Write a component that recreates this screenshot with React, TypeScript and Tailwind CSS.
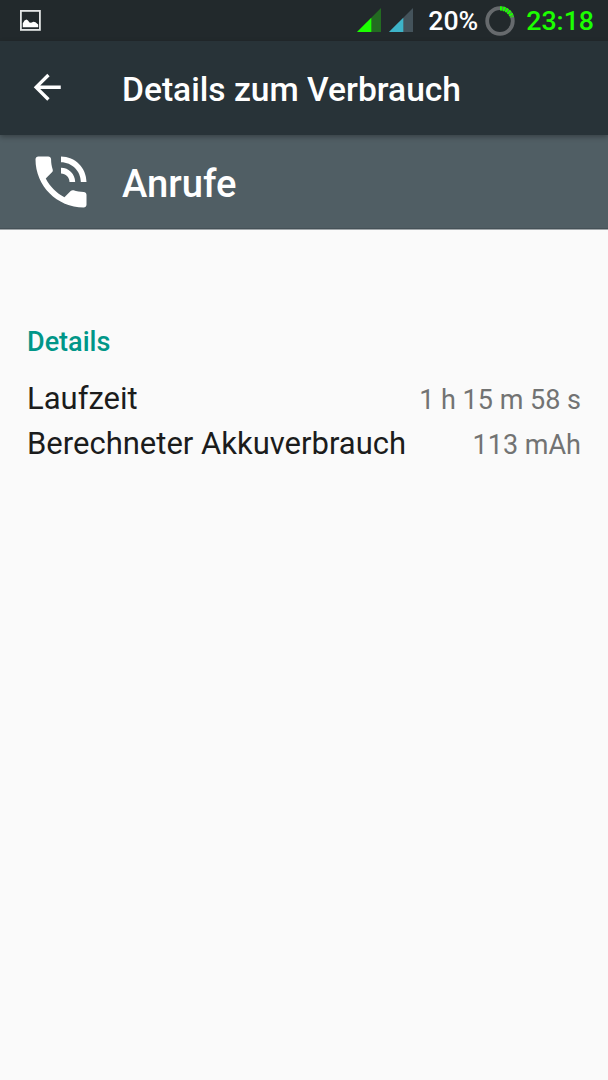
import React from 'react';

interface DetailRowProps {
    label: string;
    value: string;
}

interface SignalIconProps {
    color: string;
    background: string;
}

const details: DetailRowProps[] = [
    { label: 'Laufzeit', value: '1 h 15 m 58 s' },
    { label: 'Berechneter Akkuverbrauch', value: '113 mAh' },
];

function ScreenshotIcon() {
    return (
        <svg width="21" height="21" viewBox="0 0 21 21">
            <rect x="0.9" y="0.9" width="19" height="19" fill="none" stroke="#e4e6e7" strokeWidth="1.8" />
            <path d="M2.8 17.2V13.2L4.5 10.6L6.5 9.6L8 10.6L9.5 12.4L11 12.8L13.5 11.8L15.5 12.2L18.2 14.5V17.2Z" fill="#fff" />
        </svg>
    );
}

function SignalIcon({ color, background }: SignalIconProps) {
    return (
        <svg className="mb-0.5" width="24" height="24" viewBox="0 0 24 24">
            <path d="M0 24L24 0V24Z" fill={background} />
            <path d="M0 24L14.3 9.7V24Z" fill={color} />
        </svg>
    );
}

function BatteryRing() {
    return (
        <svg width="30" height="30" viewBox="0 0 30 30" fill="none">
            <circle cx="15" cy="15" r="12.8" stroke="#666a6d" strokeWidth="3.8" />
            {/* 20 % charge, starting at twelve o'clock */}
            <path d="M15 2.4A12.6 12.6 0 0 1 27 11.1" stroke="#1cff00" strokeWidth="4.4" strokeDasharray="2.2 0.8" />
        </svg>
    );
}

function StatusBar() {
    return (
        <div className="flex h-[41px] items-center bg-[#22292c] pl-5 pr-[14px]">
            <ScreenshotIcon />
            <div className="ml-auto flex items-center">
                <SignalIcon color="#1cff00" background="#236b21" />
                <span className="ml-2 flex">
                    <SignalIcon color="#3db4c9" background="#44535b" />
                </span>
                <span className="ml-[15px] pt-0.5 text-[26.7px] font-medium leading-none text-white">20%</span>
                <span className="ml-[7px] flex">
                    <BatteryRing />
                </span>
                <span className="ml-[11px] pt-0.5 text-[26.7px] font-medium leading-none text-[#1cff00]">23:18</span>
            </div>
        </div>
    );
}

function DetailRow({ label, value }: DetailRowProps) {
    return (
        <div className="flex h-[45px] items-center justify-between">
            <span className="pt-px text-[31px] text-[#1b1c1c]">{label}</span>
            <span className="pt-[3px] text-[27px] text-[#727373]">{value}</span>
        </div>
    );
}

export default function App() {
    return (
        <div className="flex h-[1080px] w-[608px] flex-col overflow-hidden bg-[#fafafa] font-['Roboto',sans-serif]">
            <StatusBar />

            {/* Toolbar */}
            <header className="z-10 flex h-[94px] shrink-0 items-center bg-[#283338] pl-[27px] shadow-[0_2px_5px_rgba(0,0,0,0.3)]">
                <button type="button" className="w-[95px] pb-px">
                    <svg width="40.5" height="40.5" viewBox="0 0 24 24" fill="#fff">
                        <path d="M20 11H7.83l5.59-5.59L12 4l-8 8 8 8 1.41-1.41L7.83 13H20v-2z" />
                    </svg>
                </button>
                <h1 className="pt-1 text-[33.6px] font-medium text-white">Details zum Verbrauch</h1>
            </header>

            {/* App entry */}
            <section className="flex h-[95px] shrink-0 items-center border-b border-[#a0a6a9] bg-[#505e64] pl-[27px] shadow-[inset_0_-1px_0_#455157]">
                <svg className="mr-[27px]" width="68" height="68" viewBox="0 0 24 24" fill="#fff">
                    <path d="M20 15.5c-1.25 0-2.45-.2-3.57-.57-.35-.11-.74-.03-1.02.24l-2.2 2.2c-2.83-1.44-5.15-3.75-6.59-6.59l2.2-2.21c.28-.26.36-.65.25-1C8.7 6.45 8.5 5.25 8.5 4c0-.55-.45-1-1-1H4c-.55 0-1 .45-1 1 0 9.39 7.61 17 17 17 .55 0 1-.45 1-1v-3.5c0-.55-.45-1-1-1zM19 12h2c0-4.97-4.03-9-9-9v2c3.87 0 7 3.13 7 7zm-4 0h2c0-2.76-2.24-5-5-5v2c1.66 0 3 1.34 3 3z" />
                </svg>
                <h2 className="pt-[5px] text-[38.2px] font-medium text-white">Anrufe</h2>
            </section>

            <main className="px-[27px] pt-[92px]">
                <h3 className="mb-3.5 text-[27px] font-medium leading-10 text-[#009688]">Details</h3>
                {details.map((row) => (
                    <DetailRow key={row.label} {...row} />
                ))}
            </main>
        </div>
    );
}
